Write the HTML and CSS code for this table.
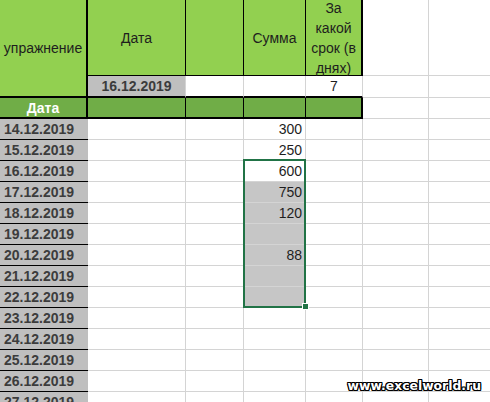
FILE: index.html
```html
<!DOCTYPE html>
<html lang="ru">
<head>
<meta charset="utf-8">
<title>Лист</title>
<link rel="stylesheet" href="styles.css">
</head>
<body>
<div class="sheet">
  <div class="grid">
    <!-- row 1 -->
    <div class="c hd ha">упражнение</div>
    <div class="c hd">Дата</div>
    <div class="c hd"></div>
    <div class="c hd">Сумма</div>
    <div class="c hd he"><div class="wrap">За<br>какой<br>срок (в<br>днях)</div></div>
    <div class="c"></div>
    <div class="c"></div>
    <!-- row 2 -->
    <div class="c r2 gray bold center">16.12.2019</div>
    <div class="c r2"></div>
    <div class="c r2"></div>
    <div class="c r2 center">7</div>
    <div class="c"></div>
    <div class="c"></div>
    <!-- row 3 -->
    <div class="c r3 r3a">Дата</div>
    <div class="c r3"></div>
    <div class="c r3"></div>
    <div class="c r3"></div>
    <div class="c r3 r3e"></div>
    <div class="c"></div>
    <div class="c"></div>
    <!-- data rows -->
    <div class="c date">14.12.2019</div><div class="c"></div><div class="c"></div><div class="c num">300</div><div class="c"></div><div class="c"></div><div class="c"></div>
    <div class="c date">15.12.2019</div><div class="c"></div><div class="c"></div><div class="c num">250</div><div class="c"></div><div class="c"></div><div class="c"></div>
    <div class="c date">16.12.2019</div><div class="c"></div><div class="c"></div><div class="c num">600</div><div class="c"></div><div class="c"></div><div class="c"></div>
    <div class="c date">17.12.2019</div><div class="c"></div><div class="c"></div><div class="c num sel">750</div><div class="c"></div><div class="c"></div><div class="c"></div>
    <div class="c date">18.12.2019</div><div class="c"></div><div class="c"></div><div class="c num sel">120</div><div class="c"></div><div class="c"></div><div class="c"></div>
    <div class="c date">19.12.2019</div><div class="c"></div><div class="c"></div><div class="c num sel"></div><div class="c"></div><div class="c"></div><div class="c"></div>
    <div class="c date">20.12.2019</div><div class="c"></div><div class="c"></div><div class="c num sel">88</div><div class="c"></div><div class="c"></div><div class="c"></div>
    <div class="c date">21.12.2019</div><div class="c"></div><div class="c"></div><div class="c num sel"></div><div class="c"></div><div class="c"></div><div class="c"></div>
    <div class="c date">22.12.2019</div><div class="c"></div><div class="c"></div><div class="c num sel"></div><div class="c"></div><div class="c"></div><div class="c"></div>
    <div class="c date">23.12.2019</div><div class="c"></div><div class="c"></div><div class="c num"></div><div class="c"></div><div class="c"></div><div class="c"></div>
    <div class="c date">24.12.2019</div><div class="c"></div><div class="c"></div><div class="c num"></div><div class="c"></div><div class="c"></div><div class="c"></div>
    <div class="c date">25.12.2019</div><div class="c"></div><div class="c"></div><div class="c num"></div><div class="c"></div><div class="c"></div><div class="c"></div>
    <div class="c date">26.12.2019</div><div class="c"></div><div class="c"></div><div class="c num"></div><div class="c"></div><div class="c"></div><div class="c"></div>
    <div class="c date">27.12.2019</div><div class="c"></div><div class="c"></div><div class="c num"></div><div class="c"></div><div class="c"></div><div class="c"></div>
  </div>
  <div class="selection"></div>
  <div class="handle"></div>
  <div class="watermark">www.excelworld.ru</div>
</div>
</body>
</html>
```

FILE: styles.css
```css
html, body {
  margin: 0;
  padding: 0;
  background: #fff;
  overflow: hidden;
}
body {
  width: 490px;
  height: 402px;
  font-family: "Liberation Sans", Arial, sans-serif;
}
.sheet {
  position: relative;
  width: 490px;
  height: 402px;
  overflow: hidden;
}
.grid {
  display: grid;
  grid-template-columns: 88px 98px 58px 62px 57px 66px 70px;
  grid-template-rows: 76px 22px 21px repeat(14, 21px);
}
.c {
  box-sizing: border-box;
  border-right: 1px solid #d4d4d4;
  border-bottom: 1px solid #d4d4d4;
  display: flex;
  align-items: center;
  padding: 0 3px;
  font-size: 14px;
  color: #1e1e1e;
  white-space: nowrap;
  min-width: 0;
}
.hd {
  background: #92d050;
  border-right-color: #000;
  border-bottom-color: #000;
  justify-content: center;
  text-align: center;
}
.ha {
  grid-row: span 2;
  border-right: 2px solid #000;
  border-bottom: 2px solid #000;
  padding: 0;
  overflow: hidden;
}
.he {
  border-right: 2px solid #000;
  height: 76px;
}
.wrap {
  line-height: 20px;
  height: 76px;
  display: flex;
  align-items: center;
  justify-content: center;
  text-align: center;
}
.r2 {
  border-bottom: 2px solid #000;
}
.gray {
  background: #bfbfbf;
}
.bold {
  font-weight: bold;
  color: #3c3c3c;
}
.center {
  justify-content: center;
}
.r3 {
  background: #70ad47;
  border-right-color: #000;
  border-bottom: 2px solid #000;
}
.r3a {
  border-right: 2px solid #000;
  color: #fff;
  font-weight: bold;
  justify-content: center;
}
.r3e {
  border-right: 2px solid #000;
}
.date {
  background: #bfbfbf;
  border-right: 0;
  border-bottom: 1px solid #000;
  font-weight: bold;
  color: #3c3c3c;
  padding-left: 4px;
}
.num {
  justify-content: flex-end;
  padding-right: 3px;
}
.sel {
  background: #c6c6c6;
}
.selection {
  position: absolute;
  left: 243px;
  top: 159px;
  width: 63px;
  height: 149px;
  box-sizing: border-box;
  border: 2px solid #217346;
}
.handle {
  position: absolute;
  left: 302px;
  top: 303px;
  width: 7px;
  height: 7px;
  box-sizing: border-box;
  background: #217346;
  border: 1px solid #fff;
}
.watermark {
  position: absolute;
  right: 9px;
  top: 378px;
  font-family: "DejaVu Sans", Verdana, sans-serif;
  font-weight: bold;
  font-size: 12.4px;
  color: #fff;
  text-shadow: 1px 0 0 #000, -1px 0 0 #000, 0 1px 0 #000, 0 -1px 0 #000,
    1px 1px 0 #000, -1px -1px 0 #000, 1px -1px 0 #000, -1px 1px 0 #000;
}
```
